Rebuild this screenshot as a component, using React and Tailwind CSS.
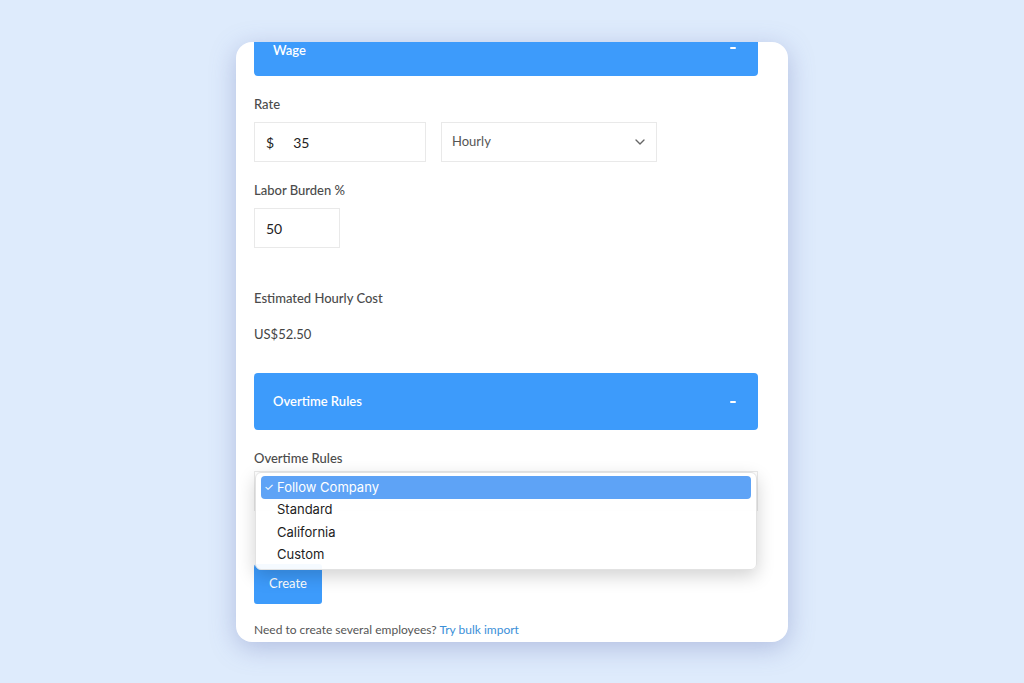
import { ChevronDown } from "lucide-react";

const OPTIONS = ["Follow Company", "Standard", "California", "Custom"];

function SectionBar({ title, className = "", titleClass = "" }) {
  return (
    <div
      className={`flex h-[57px] items-center justify-between rounded-[4px] bg-[#3d9bfb] px-[19px] text-[13px] font-semibold text-white ${className}`}
    >
      <span className={titleClass}>{title}</span>
      <span className="mr-[3px] block h-[2px] w-[6px] rounded bg-white" />
    </div>
  );
}

function Label({ children, className = "" }) {
  return (
    <div className={`h-[18px] text-[13px] leading-[18px] font-medium text-[#4b4b4b] ${className}`}>
      {children}
    </div>
  );
}

export default function App() {
  return (
    <div
      className="flex min-h-screen justify-center bg-[#deebfc] pt-[42px]"
      style={{ fontFamily: "Lato, 'Noto Sans', sans-serif" }}
    >
      <div className="h-[600px] w-[552px] overflow-hidden rounded-[16px] bg-white pl-[18px] pr-[30px] shadow-[0_6px_26px_rgba(95,105,175,0.35)]">
        {/* header scrolled partly out of view */}
        <SectionBar title="Wage" className="-mt-[23px] rounded-t-none" titleClass="mt-[4px] leading-[14px]" />

        {/* Rate */}
        <Label className="mt-[19px]">Rate</Label>
        <div className="mt-[9px] flex gap-[15px]">
          <div className="flex h-[40px] w-[172px] items-center border border-[#e9e9e9] px-[11px] text-[14px] text-[#222]">
            <span>$</span>
            <span className="ml-[19px]">35</span>
          </div>
          <div className="flex h-[40px] w-[216px] items-center justify-between border border-[#e9e9e9] pl-[10px] pr-[8px] text-[13px] text-[#555]">
            <span>Hourly</span>
            <ChevronDown size={16} strokeWidth={2} className="text-[#666]" />
          </div>
        </div>

        {/* Labor burden */}
        <Label className="mt-[19px]">Labor Burden %</Label>
        <div className="mt-[9px] flex h-[40px] w-[86px] items-center border border-[#e9e9e9] px-[11px] text-[14px] text-[#222]">
          50
        </div>

        {/* Estimated cost */}
        <Label className="mt-[41px]">Estimated Hourly Cost</Label>
        <div className="mt-[18px] h-[18px] text-[13px] leading-[18px] text-[#444]">US$52.50</div>

        <SectionBar title="Overtime Rules" className="mt-[30px]" />

        {/* Overtime select with open list */}
        <Label className="mt-[19px]">Overtime Rules</Label>
        <div className="relative mt-[4px] h-[40px] border border-[#e9e9e9]">
          <div
            className="absolute left-0 right-0 top-0 z-10 h-[98px] rounded-[6px] border border-[#e2e2e2] bg-white/95 px-[5px] pt-[3px] shadow-[0_6px_18px_rgba(0,0,0,0.18)]"
            style={{ fontFamily: "Inter, 'Liberation Sans', sans-serif" }}
          >
            {OPTIONS.map((opt, i) => (
              <div
                key={opt}
                className={`flex h-[22.5px] items-center rounded-[4px] text-[13px] ${
                  i === 0 ? "bg-[#5ea3f6] text-white" : "text-[#1d1d1d]"
                }`}
              >
                <span className="w-[16px] pl-[3px] text-[11px]">{i === 0 ? "✓" : ""}</span>
                <span>{opt}</span>
              </div>
            ))}
          </div>
        </div>

        <button className="mt-[53px] flex h-[40px] w-[68px] items-center justify-center rounded-[3px] bg-[#3d9bfb] text-[13px] text-white">
          Create
        </button>

        <div className="mt-[17px] text-[12px] text-[#555]">
          Need to create several employees? <span className="text-[#3b8fd8]">Try bulk import</span>
        </div>
      </div>
    </div>
  );
}
